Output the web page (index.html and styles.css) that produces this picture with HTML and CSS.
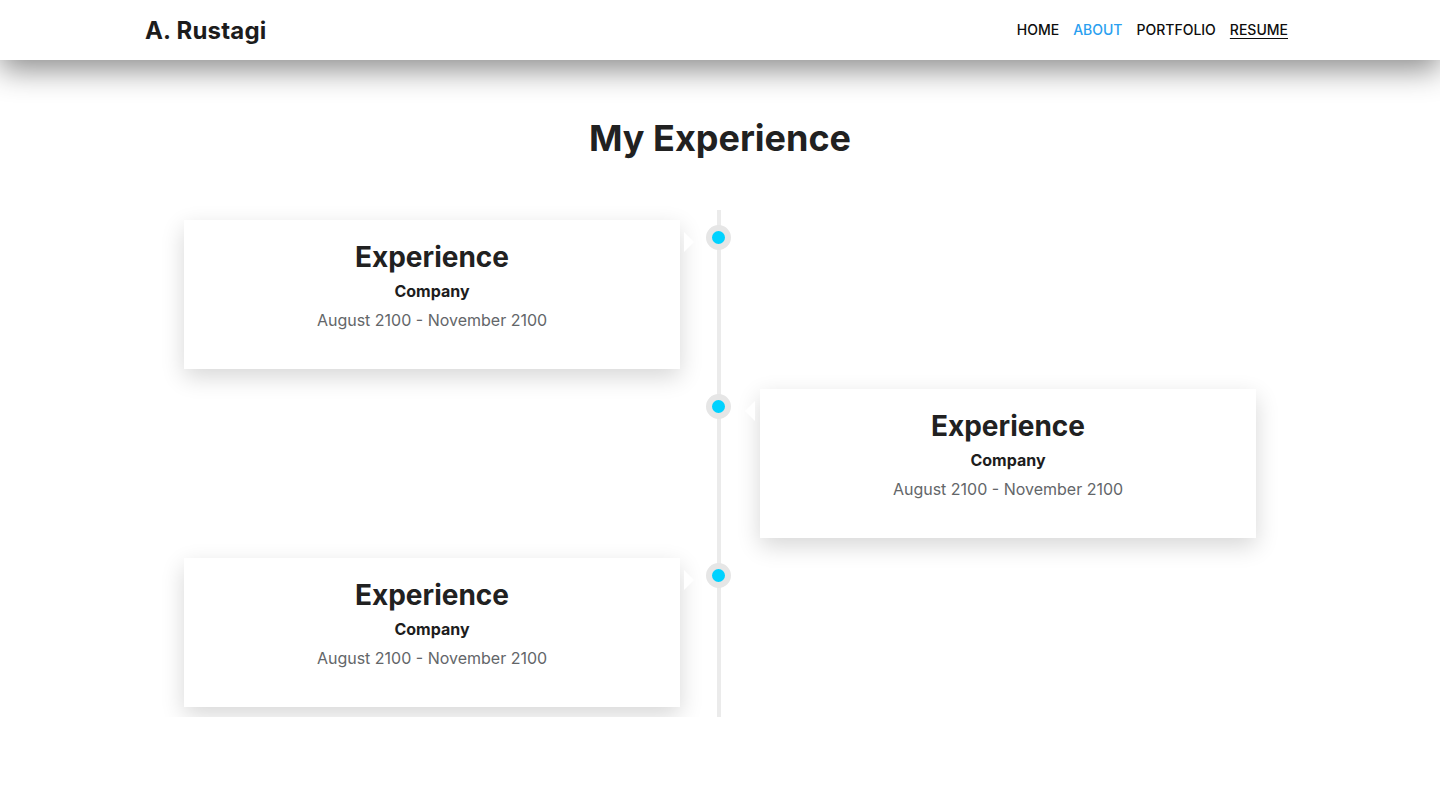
FILE: index.html
```html
<!DOCTYPE html>
<html lang="en">
<head>
<meta charset="utf-8">
<title>A. Rustagi - Experience</title>
<link rel="stylesheet" href="styles.css">
</head>
<body>
<header class="navbar">
  <div class="nav-inner">
    <a class="brand" href="#">A. Rustagi</a>
    <nav class="nav-links">
      <a href="#" class="nav-link">HOME</a>
      <a href="#" class="nav-link active">ABOUT</a>
      <a href="#" class="nav-link">PORTFOLIO</a>
      <a href="#" class="nav-link underlined">RESUME</a>
    </nav>
  </div>
</header>
<main class="main">
  <h1 class="page-title">My Experience</h1>
  <div class="timeline">
    <div class="tl-item left">
      <div class="card">
        <h2 class="card-title">Experience</h2>
        <div class="card-company">Company</div>
        <div class="card-date">August 2100 - November 2100</div>
      </div>
    </div>
    <div class="tl-item right">
      <div class="card">
        <h2 class="card-title">Experience</h2>
        <div class="card-company">Company</div>
        <div class="card-date">August 2100 - November 2100</div>
      </div>
    </div>
    <div class="tl-item left">
      <div class="card">
        <h2 class="card-title">Experience</h2>
        <div class="card-company">Company</div>
        <div class="card-date">August 2100 - November 2100</div>
      </div>
    </div>
  </div>
</main>
</body>
</html>
```

FILE: styles.css
```css
*, *::before, *::after { box-sizing: border-box; }
html, body { margin: 0; padding: 0; background: #fff; }
body {
  font-family: Inter, "Open Sans", "Liberation Sans", sans-serif;
  color: #212121;
}
a { text-decoration: none; color: inherit; }

.navbar {
  height: 60px;
  background: #fff;
  box-shadow: 0 10px 30px rgba(0, 0, 0, 0.45);
  position: relative;
  z-index: 2;
}
.nav-inner {
  height: 60px;
  padding: 0 152px 0 145px;
  display: flex;
  align-items: center;
  justify-content: space-between;
}
.brand {
  font-size: 24px;
  font-weight: 700;
  color: #1c1c1c;
  letter-spacing: 0.2px;
}
.nav-links {
  display: flex;
  gap: 14px;
  padding-bottom: 2px;
}
.nav-link {
  font-size: 14px;
  font-weight: 500;
  color: #0d0d0d;
}
.nav-link.active { color: #2a9ff0; }
.nav-link.underlined { text-decoration: underline; text-underline-offset: 3px; }

.main { padding-top: 56px; }
.page-title {
  margin: 0 0 50px;
  text-align: center;
  font-size: 36px;
  line-height: 44px;
  font-weight: 700;
  color: #212121;
}

.timeline {
  position: relative;
  width: 1152px;
  margin: 0 auto;
}
.timeline::after {
  content: "";
  position: absolute;
  top: 0;
  bottom: 0;
  left: 50%;
  width: 4px;
  margin-left: -3px;
  background: #ebebeb;
}
.tl-item {
  position: relative;
  width: 50%;
  padding: 10px 40px;
}
.tl-item.right { margin-left: 50%; }

.tl-item::after {
  content: "";
  position: absolute;
  top: 15px;
  width: 25px;
  height: 25px;
  border-radius: 50%;
  background: #00d2ff;
  border: 6px solid #e6e6e6;
  z-index: 1;
}
.tl-item.left::after { right: -10.5px; }
.tl-item.right::after { left: -14.5px; }

.tl-item::before {
  content: "";
  position: absolute;
  top: 22px;
  width: 0;
  height: 0;
  border: 10px solid transparent;
  z-index: 1;
}
.tl-item.left::before {
  right: 26px;
  border-right-width: 0;
  border-left-color: #fff;
}
.tl-item.right::before {
  left: 25px;
  border-left-width: 0;
  border-right-color: #fff;
}

.card {
  background: #fff;
  height: 149px;
  padding: 20px 30px 0;
  text-align: center;
  box-shadow: 0 8px 22px rgba(0, 0, 0, 0.16);
}
.card-title {
  margin: 0;
  font-size: 28px;
  line-height: 34px;
  font-weight: 700;
  color: #212121;
}
.card-company {
  margin-top: 5px;
  font-size: 16px;
  line-height: 24px;
  font-weight: 700;
  color: #1d1d1d;
}
.card-date {
  margin-top: 5px;
  font-size: 16px;
  line-height: 24px;
  font-weight: 400;
  color: #636669;
}
```
